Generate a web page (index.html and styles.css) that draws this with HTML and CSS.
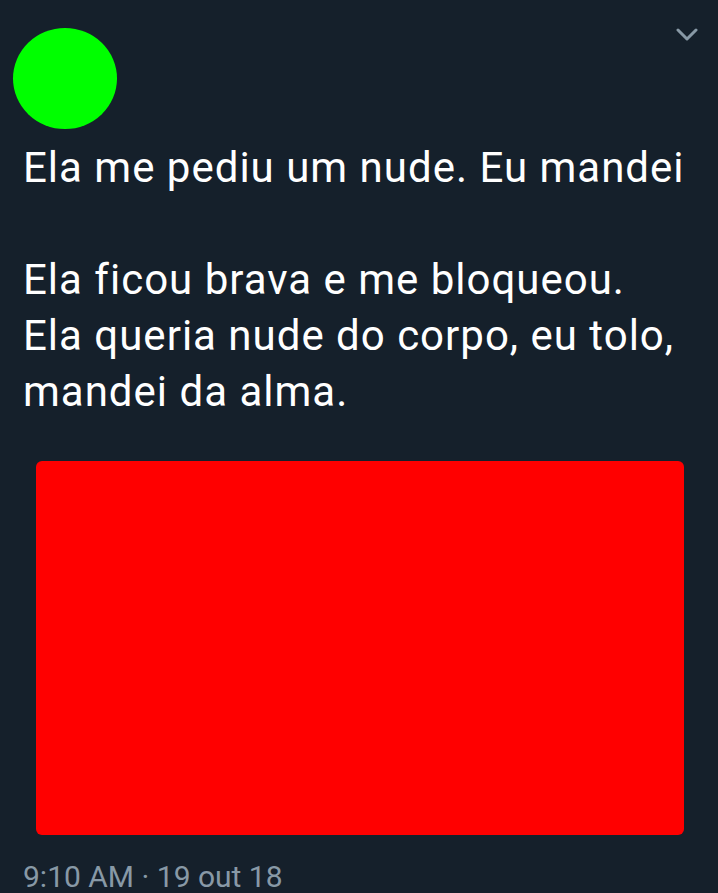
FILE: index.html
```html
<!DOCTYPE html>
<html lang="pt">
<head>
<meta charset="utf-8">
<link rel="stylesheet" href="styles.css">
</head>
<body>
<div class="tweet">
  <div class="header">
    <div class="avatar"></div>
    <svg class="chevron" width="22" height="14" viewBox="0 0 22 14"><path d="M2 2 L11 11 L20 2" fill="none" stroke="#8899a6" stroke-width="3" stroke-linecap="round" stroke-linejoin="round"/></svg>
  </div>
  <div class="text">
    <p>Ela me pediu um nude. Eu mandei</p>
    <p class="blank">&nbsp;</p>
    <p>Ela ficou brava e me bloqueou.</p>
    <p>Ela queria nude do corpo, eu tolo,</p>
    <p>mandei da alma.</p>
  </div>
  <div class="media"></div>
  <div class="meta">9:10 AM · 19 out 18</div>
</div>
</body>
</html>
```

FILE: styles.css
```css
html, body {
  margin: 0;
  padding: 0;
  background: #15202b;
}
body {
  width: 718px;
  height: 893px;
  overflow: hidden;
  font-family: Roboto, "Noto Sans", sans-serif;
}
.tweet {
  display: flex;
  flex-direction: column;
}
.header {
  display: flex;
  justify-content: space-between;
  align-items: flex-start;
  padding: 28px 20px 0 13px;
}
.avatar {
  width: 104px;
  height: 101px;
  border-radius: 50%;
  background: #00ff00;
}
.chevron {
  margin-top: 0;
}
.text {
  margin-top: 11px;
  padding-left: 23px;
  color: #ffffff;
  font-size: 42px;
  letter-spacing: 1px;
  line-height: 56px;
}
.text p {
  margin: 0;
  white-space: nowrap;
}
.media {
  margin: 41px 0 0 36px;
  width: 648px;
  height: 374px;
  background: #ff0000;
  border-radius: 6px;
}
.meta {
  margin-top: 25px;
  padding-left: 23px;
  color: #8899a6;
  font-size: 30px;
  line-height: 34px;
}
```
